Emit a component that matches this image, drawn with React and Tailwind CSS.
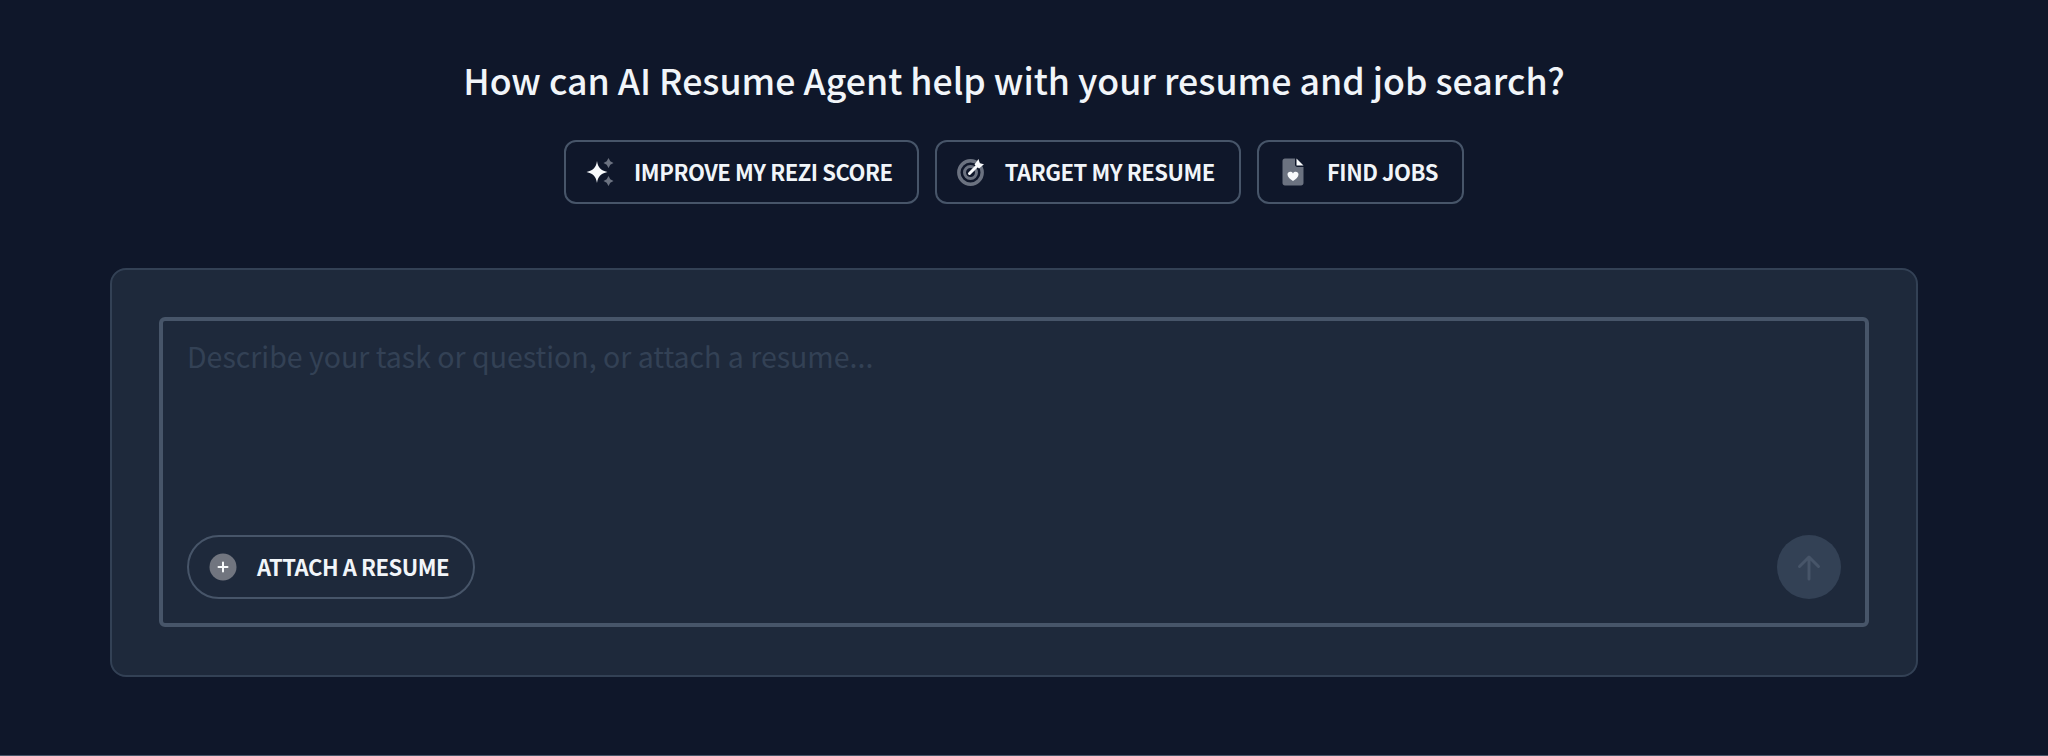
function SparkleIcon() {
  return (
    <svg width="28" height="28" viewBox="0 0 28 28">
      <path d="M11 3C12 9.5 14.4 12.2 21.5 14C14.4 15.8 12 18.5 11 25C10 18.5 7.6 15.8 0.5 14C7.6 12.2 10 9.5 11 3Z" fill="#f8fafc" />
      <path d="M22.5 0L24.3 3.2L27.5 5L24.3 6.8L22.5 10L20.7 6.8L17.5 5L20.7 3.2Z" fill="#6b7280" />
      <path d="M22.5 18L24.3 21.2L27.5 23L24.3 24.8L22.5 28L20.7 24.8L17.5 23L20.7 21.2Z" fill="#6b7280" />
    </svg>
  )
}

function TargetIcon() {
  return (
    <svg width="28" height="28" viewBox="0 0 28 28" fill="none">
      <circle cx="13.5" cy="14.5" r="11.7" stroke="#6b7280" strokeWidth="3.4" />
      <circle cx="13.5" cy="14.5" r="6" stroke="#6b7280" strokeWidth="3" />
      <path d="M12.5 15.5L20 8" stroke="#f8fafc" strokeWidth="3" strokeLinecap="round" />
      <path d="M17.5 6.5L21.5 1L22.8 5.2L27 6.2L22 10.5Z" fill="#f8fafc" />
    </svg>
  )
}

function FileHeartIcon() {
  return (
    <svg width="22" height="28" viewBox="0 0 22 28">
      <path d="M3 0.5H13V6.5C13 8 14 9 15.5 9H21.5V25C21.5 26.5 20.5 27.5 19 27.5H3C1.5 27.5 0.5 26.5 0.5 25V3C0.5 1.5 1.5 0.5 3 0.5Z" fill="#6b7280" />
      <path d="M14.5 0.5L21.5 7.5H14.5Z" fill="#f8fafc" />
      <path d="M11 23C8 20.8 5.5 19 5.5 16.4C5.5 13.6 9.4 12.9 11 15.4C12.6 12.9 16.5 13.6 16.5 16.4C16.5 19 14 20.8 11 23Z" fill="#f8fafc" />
    </svg>
  )
}

function PlusIcon() {
  return (
    <svg width="28" height="28" viewBox="0 0 28 28">
      <circle cx="14" cy="14" r="13.5" fill="#71757f" />
      <path d="M14 9.5V18.5M9.5 14H18.5" stroke="#f8fafc" strokeWidth="2" strokeLinecap="round" />
    </svg>
  )
}

function ArrowUpIcon() {
  return (
    <svg width="24" height="28" viewBox="0 0 24 28" fill="none">
      <path d="M12 26V5M2.5 13.5L12 4L21.5 13.5" stroke="#475569" strokeWidth="3" strokeLinecap="round" strokeLinejoin="round" />
    </svg>
  )
}

function ActionButton({ icon, label }) {
  return (
    <button className="flex h-16 items-center gap-5 rounded-xl border-2 border-[#475569] pl-5 pr-6">
      <span className="flex w-7 items-center justify-center">{icon}</span>
      <span className="pb-[2px] text-[22px] font-bold tracking-[-0.45px] text-[#f1f5f9]">{label}</span>
    </button>
  )
}

export default function App() {
  return (
    <div className="h-[756px] border-b border-[#475569] bg-[#0f172a] font-['Noto_Sans_CJK_SC','Liberation_Sans',sans-serif]">
      <div className="w-[2028px] pt-[53px]">
        <h1 className="text-center text-[35.7px] leading-[54px] font-medium text-[#f1f5f9]">
          How can AI Resume Agent help with your resume and job search?
        </h1>

        <div className="mt-[33px] flex justify-center gap-4">
          <ActionButton icon={<SparkleIcon />} label="IMPROVE MY REZI SCORE" />
          <ActionButton icon={<TargetIcon />} label="TARGET MY RESUME" />
          <ActionButton icon={<FileHeartIcon />} label="FIND JOBS" />
        </div>

        <div className="mx-[110px] mt-16 rounded-2xl border-2 border-[#334155] bg-[#1e293b] px-[47px] pt-[47px] pb-[48px]">
          <div className="flex h-[310px] flex-col justify-between rounded-md border-4 border-[#475569] px-6 pt-[12px] pb-[24px]">
            <p className="text-[28.5px] leading-[45px] text-[#334155]">
              Describe your task or question, or attach a resume...
            </p>
            <div className="flex items-center justify-between">
              <button className="flex h-16 items-center gap-5 rounded-full border-2 border-[#475569] pl-5 pr-6">
                <PlusIcon />
                <span className="pb-[2px] text-[22px] font-bold tracking-[-0.45px] text-[#f1f5f9]">ATTACH A RESUME</span>
              </button>
              <button className="flex h-16 w-16 items-center justify-center rounded-full bg-[#334155]">
                <ArrowUpIcon />
              </button>
            </div>
          </div>
        </div>
      </div>
    </div>
  )
}
